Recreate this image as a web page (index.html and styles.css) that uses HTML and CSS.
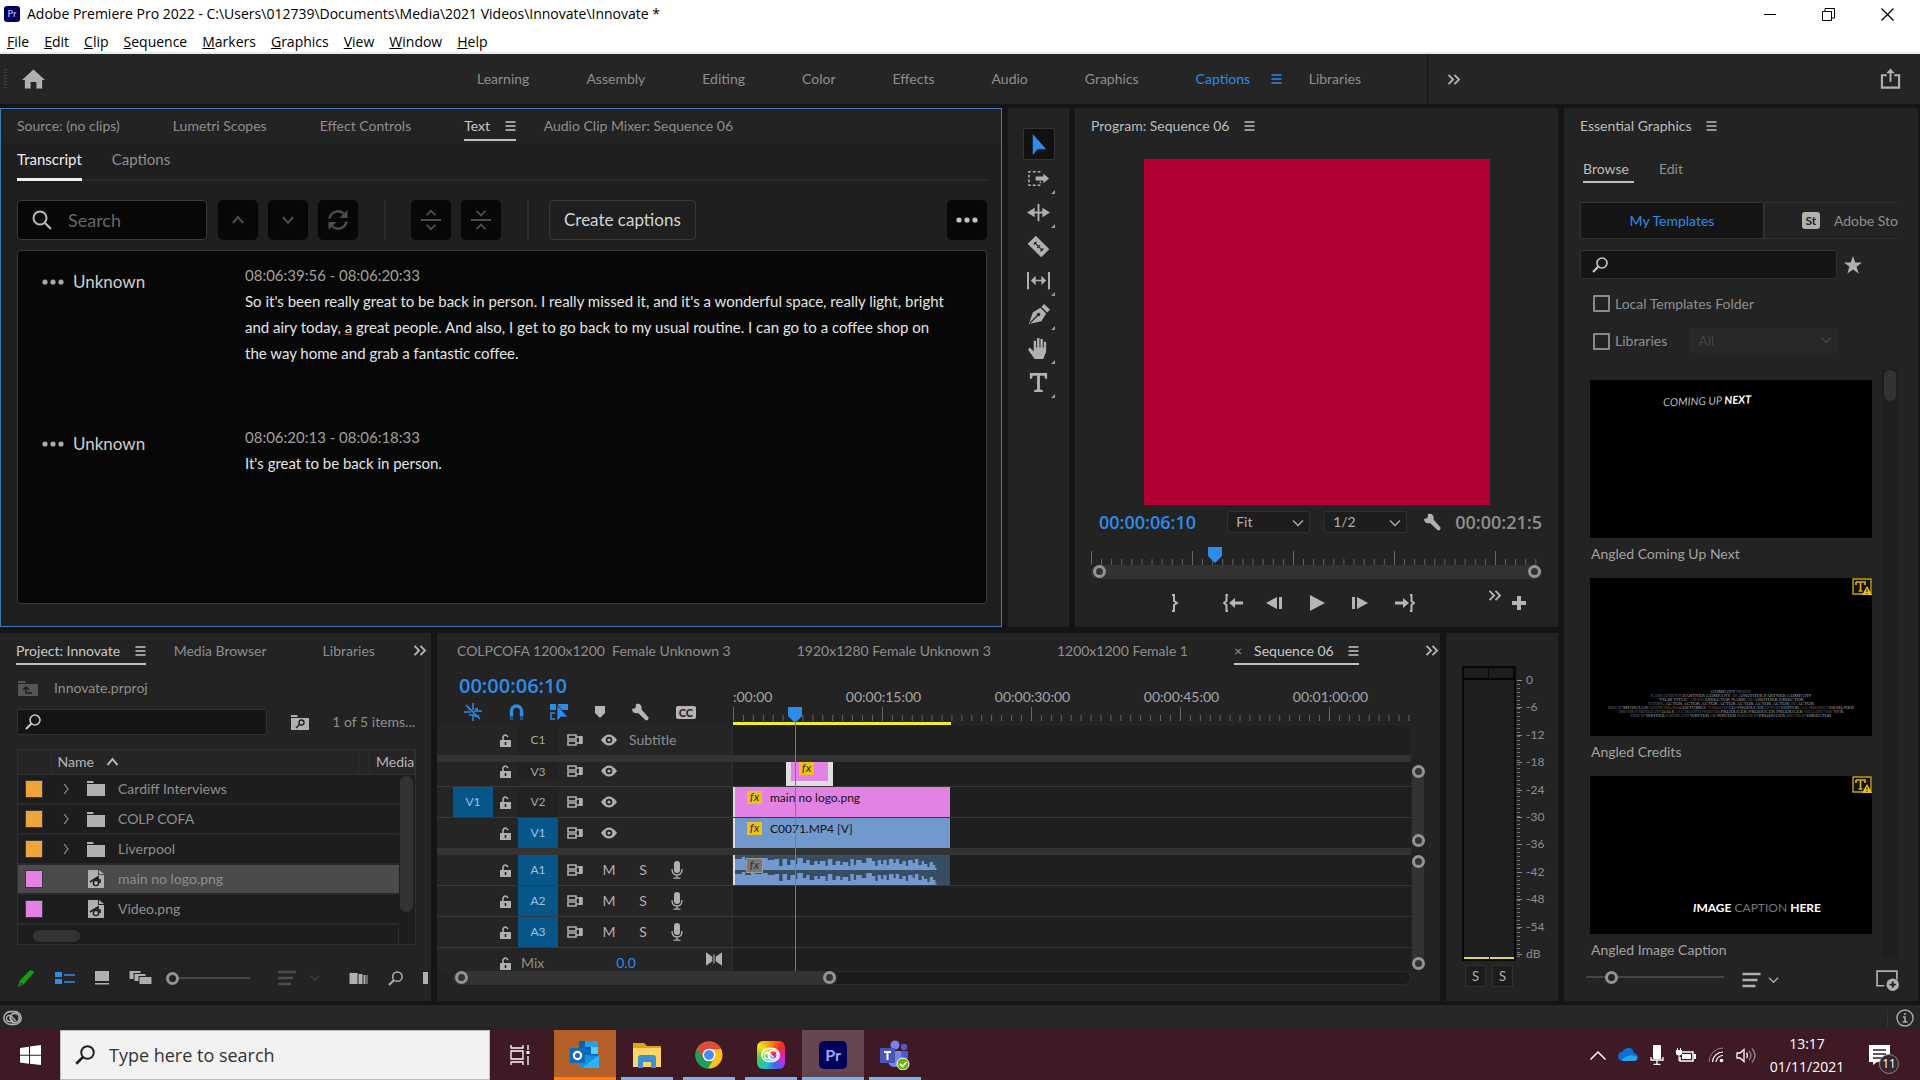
FILE: index.html
```html
<!DOCTYPE html>
<html lang="en">
<head>
    <meta charset="UTF-8">
    <meta name="viewport" content="width=device-width, initial-scale=1.0">
    <title>Adobe Premiere Pro 2022</title>
    <link rel="stylesheet" href="styles.css">
</head>
<body>
    <!-- icon sprite -->
    <svg class="sprite" aria-hidden="true">
        <symbol id="menu" viewBox="0 0 10 10"><path d="M0 1h10M0 5h10M0 9h10" stroke="currentColor" stroke-width="1.4"/></symbol>
        <symbol id="more" viewBox="0 0 22 6"><g fill="currentColor"><circle cx="3" cy="3" r="2.6"/><circle cx="11" cy="3" r="2.6"/><circle cx="19" cy="3" r="2.6"/></g></symbol>
        <symbol id="chevrons" viewBox="0 0 14 12"><path d="M1 1l5 5-5 5M7.500 1l5 5-5 5" fill="none" stroke="currentColor" stroke-width="2"/></symbol>
        <symbol id="down" viewBox="0 0 12 8"><path d="M1 1.500l5 5 5-5" fill="none" stroke="currentColor" stroke-width="1.300"/></symbol>
        <symbol id="home" viewBox="0 0 24 20"><path d="M12 0L0 11h3v9h6v-7h6v7h6v-9h3z" fill="currentColor"/></symbol>
        <symbol id="share" viewBox="0 0 22 22"><path d="M7 7H2v13h18V7h-5" fill="none" stroke="currentColor" stroke-width="2.200"/><path d="M10 14V5H6.500L11 0l4.500 5H12v9z" fill="currentColor"/></symbol>
        <symbol id="glass" viewBox="0 0 20 20"><circle cx="8" cy="8" r="6.500" fill="none" stroke="currentColor" stroke-width="2"/><path d="M13 13l6 6" stroke="currentColor" stroke-width="2.200"/></symbol>
        <symbol id="glass-flip" viewBox="0 0 16 16"><circle cx="10" cy="6" r="5" fill="none" stroke="currentColor" stroke-width="1.600"/><path d="M6.500 9.500L1 15" stroke="currentColor" stroke-width="2.200"/></symbol>
        <symbol id="up-chev" viewBox="0 0 14 10"><path d="M2 8l5-6 5 6" fill="none" stroke="currentColor" stroke-width="2"/></symbol>
        <symbol id="down-chev" viewBox="0 0 14 10"><path d="M2 2l5 6 5-6" fill="none" stroke="currentColor" stroke-width="2"/></symbol>
        <symbol id="refresh" viewBox="0 0 22 22"><path d="M2.500 9.500A8.500 8.500 0 0 1 17 5M19.500 12.500A8.500 8.500 0 0 1 5 17" fill="none" stroke="currentColor" stroke-width="2.400"/><path d="M20.500 1v8h-8zM1.500 21v-8h8z" fill="currentColor"/></symbol>
        <symbol id="split" viewBox="0 0 22 24"><path d="M0 12h22M6 7l5-5 5 5M6 17l5 5 5-5" fill="none" stroke="currentColor" stroke-width="2"/></symbol>
        <symbol id="merge" viewBox="0 0 22 24"><path d="M0 12h22M6 2l5 5 5-5M6 22l5-5 5 5" fill="none" stroke="currentColor" stroke-width="2"/></symbol>
        <symbol id="arrow" viewBox="0 0 24 24"><path d="M6 1v22l5-6h9z" fill="currentColor"/></symbol>
        <symbol id="track-select" viewBox="0 0 24 24"><path d="M14 5H2v14h12v-4" fill="none" stroke="currentColor" stroke-width="1.600" stroke-dasharray="3 2"/><path d="M9 10h8V7l6 5-6 5v-3H9z" fill="currentColor"/></symbol>
        <symbol id="ripple" viewBox="0 0 24 24"><path d="M12 3v18M4 12h16" stroke="currentColor" stroke-width="2"/><path d="M0 12l8-5v10zM24 12l-8-5v10z" fill="currentColor"/></symbol>
        <symbol id="razor" viewBox="0 0 24 24"><g transform="rotate(45 12 12)"><rect x="2" y="6" width="20" height="12" fill="currentColor"/><path d="M6 12h12M7 10v4M12 10v4M17 10v4" stroke="#232323" stroke-width="1.300"/></g></symbol>
        <symbol id="slip" viewBox="0 0 24 24"><path d="M1 3v18M23 3v18" stroke="currentColor" stroke-width="2.200"/><path d="M7 12h10" stroke="currentColor" stroke-width="1.600"/><path d="M4 12l5-5v10zM20 12l-5-5v10z" fill="currentColor"/></symbol>
        <symbol id="pen" viewBox="0 0 24 24"><path d="M2 22L6 10l8-5 6 6-5 8zM15 4l3-3 6 6-3 3z" fill="currentColor"/><path d="M3 21l8-8" stroke="#232323" stroke-width="1.400"/><circle cx="12" cy="12" r="1.800" fill="#232323"/></symbol>
        <symbol id="hand" viewBox="0 0 24 24"><path d="M8 23L1 13l2-2 4 4V4h2.500v7h1V1H13v10h1V2h2.500v9h1V5H20v10l-3 8z" fill="currentColor"/></symbol>
        <symbol id="type" viewBox="0 0 24 24"><path d="M3 2h18v6h-2l-1-3h-4.500v14l3 1v2h-9v-2l3-1V5H6L5 8H3z" fill="currentColor"/></symbol>
        <symbol id="wrench" viewBox="0 0 18 18"><path d="M1 6l3.500-1L5 1C9-.5 11.500 3 10.500 6.500l7 8q.5 3-2.500 3l-8-7.500C4 11 1 9.500 1 6z" fill="currentColor"/></symbol>
        <symbol id="mark-in" viewBox="0 0 8 18"><path d="M1 1h2v6l3 2-3 2v6H1" fill="none" stroke="currentColor" stroke-width="2"/></symbol>
        <symbol id="go-in" viewBox="0 0 20 18"><path d="M5 1H3.500v6L1 9l2.500 2v6H5" fill="none" stroke="currentColor" stroke-width="2"/><path d="M6 9l6-5v3.500h8v3h-8V14z" fill="currentColor"/></symbol>
        <symbol id="go-out" viewBox="0 0 20 18"><path d="M15 1h1.500v6L19 9l-2.500 2v6H15" fill="none" stroke="currentColor" stroke-width="2"/><path d="M14 9L8 4v3.500H0v3h8V14z" fill="currentColor"/></symbol>
        <symbol id="step-back" viewBox="0 0 16 12"><path d="M0 6l11-6v12zM13 0h3v12h-3z" fill="currentColor"/></symbol>
        <symbol id="step-fwd" viewBox="0 0 16 12"><path d="M16 6L5 0v12zM0 0h3v12H0z" fill="currentColor"/></symbol>
        <symbol id="play" viewBox="0 0 16 16"><path d="M1 0v16l15-8z" fill="currentColor"/></symbol>
        <symbol id="plus" viewBox="0 0 14 14"><path d="M7 0v14M0 7h14" stroke="currentColor" stroke-width="4"/></symbol>
        <symbol id="head" viewBox="0 0 14 16"><path d="M0 0h14v9l-7 7-7-7z" fill="#2d8ceb"/></symbol>
        <symbol id="star" viewBox="0 0 18 18"><path d="M9 0l2.300 6.500H18l-5.400 4.200 2 6.800L9 13.500l-5.600 4 2-6.800L0 6.500h6.700z" fill="currentColor"/></symbol>
        <symbol id="warn" viewBox="0 0 20 17"><path d="M1 1h18v15H1z" fill="#111" stroke="#c9a400" stroke-width="1.400"/><path d="M4 4h9v3M8.500 4v9M6.500 13h4M4 4v3" fill="none" stroke="#d8b20c" stroke-width="1.700"/><path d="M15 8l5 9H10z" fill="#e9c51a"/><path d="M15 11v3M15 15v1" stroke="#111"/></symbol>
        <symbol id="sort" viewBox="0 0 18 16"><path d="M0 2h18M0 8h15M0 14h13" stroke="currentColor" stroke-width="2.400"/></symbol>
        <symbol id="new-layer" viewBox="0 0 22 20"><path d="M8 15H1V1h19v8" fill="none" stroke="currentColor" stroke-width="1.600"/><circle cx="16" cy="14" r="6" fill="currentColor"/><path d="M16 11v6M13 14h6" stroke="#232323" stroke-width="1.800"/></symbol>
        <symbol id="folder" viewBox="0 0 18 15"><path d="M0 0h6l1 2H0zM0 3h18v12H0z" fill="currentColor"/></symbol>
        <symbol id="folder-up" viewBox="0 0 20 15"><path d="M0 0h7l1 2H0zM0 3h20v12H0z" fill="currentColor"/><path d="M14 12H8V7M5 9l3-3 3 3" fill="none" stroke="#1d1d1d" stroke-width="1.500"/></symbol>
        <symbol id="folder-find" viewBox="0 0 18 15"><path d="M0 0h6l1 2H0zM0 3h18v12H0z" fill="currentColor"/><circle cx="10.500" cy="7.500" r="2.500" fill="none" stroke="#1d1d1d" stroke-width="1.300"/><path d="M8.500 9.500L5 13" stroke="#1d1d1d" stroke-width="1.500"/></symbol>
        <symbol id="png" viewBox="0 0 16 18"><path d="M0 0h10v5h6v13H0zM11 0l5 4h-5z" fill="currentColor"/><path d="M2 12l8-5v3M6 10h6v3" fill="none" stroke="#1d1d1d" stroke-width="1.600"/><circle cx="8" cy="13" r="2.600" fill="none" stroke="#1d1d1d" stroke-width="1.400"/></symbol>
        <symbol id="chev-right" viewBox="0 0 6 10"><path d="M1 0l4 5-4 5" fill="none" stroke="currentColor" stroke-width="1.200"/></symbol>
        <symbol id="pencil" viewBox="0 0 18 18"><path d="M0 18l2-7L12 1q3-2 5 1.500L6 15z" fill="#17a017"/><path d="M2 16l1.500-3L5 15z" fill="#232323"/></symbol>
        <symbol id="list" viewBox="0 0 20 12"><path d="M0 0h7v5H0zM0 7h7v5H0z" fill="#2d8ceb"/><path d="M9 3h11M9 10h11" stroke="#2d8ceb" stroke-width="1.300"/></symbol>
        <symbol id="icon-view" viewBox="0 0 14 14"><path d="M0 0h14v10H0zM0 12h14v1.500H0z" fill="currentColor"/></symbol>
        <symbol id="freeform" viewBox="0 0 22 14"><path d="M0 0h11v2H4v6H0zM5 3h11v2H9v5H5zM10 6h12v7H10z" fill="currentColor"/></symbol>
        <symbol id="automate" viewBox="0 0 18 11"><path d="M0 0h8v11H0zM9 1h4v10H9zM14 2h2v9h-2zM17 2h1v9h-1z" fill="currentColor"/></symbol>
        <symbol id="nest" viewBox="0 0 18 18"><path d="M9 0v7M9 11v7M5 4v3M13 5v2M0 9h7M10 8h8M2 2l14 14M11 6h3M5 12h4M10 13h5" stroke="#2d8ceb" stroke-width="1.500"/></symbol>
        <symbol id="magnet" viewBox="0 0 14 16"><path d="M2 12V7a5 5 0 0 1 10 0v5" fill="none" stroke="#2d8ceb" stroke-width="3.400"/><path d="M2 12v4M12 12v4" stroke="#1a5590" stroke-width="3.400"/></symbol>
        <symbol id="linked" viewBox="0 0 18 17"><path d="M0 0h6v6H0zM8 0h10v6H8z" fill="#2d8ceb"/><path d="M5 9H1v6h4" fill="none" stroke="#2d8ceb" stroke-width="1.500"/><path d="M7 1v16l4-4h7z" fill="#2d8ceb" stroke="#232323" stroke-width=".8"/></symbol>
        <symbol id="marker" viewBox="0 0 10 12"><path d="M0 0h10v7l-5 5-5-5z" fill="currentColor"/></symbol>
        <symbol id="lock" viewBox="0 0 11 13"><path d="M0 6h11v7H0z" fill="currentColor"/><path d="M3 6V3q2-4 5 0" fill="none" stroke="currentColor" stroke-width="1.600"/><path d="M5.500 8v3" stroke="#232323" stroke-width="1.600"/></symbol>
        <symbol id="sync" viewBox="0 0 16 12"><path d="M1 1h8v4H1zM1 7h8v4H1zM9 3h6v6H9" fill="none" stroke="currentColor" stroke-width="1.600"/><path d="M12 2h3v8h-3z" fill="currentColor"/></symbol>
        <symbol id="eye" viewBox="0 0 16 12"><path d="M0 6q8-11 16 0-8 11-16 0z" fill="currentColor"/><circle cx="8" cy="6" r="3.300" fill="#232323"/><circle cx="8" cy="6" r="1.600" fill="currentColor"/></symbol>
        <symbol id="mic" viewBox="0 0 12 18"><rect x="3" y="0" width="6" height="12" rx="3" fill="currentColor"/><path d="M1 8q0 6 5 6t5-6M6 14v3M2.500 17.200h7" fill="none" stroke="currentColor" stroke-width="1.300"/></symbol>
        <symbol id="bowtie" viewBox="0 0 14 12"><path d="M0 0l5.500 4v4L0 12zM14 0L8.500 4v4L14 12z" fill="currentColor"/><path d="M7 2v8" stroke="currentColor"/></symbol>
        <symbol id="creative" viewBox="0 0 22 16"><rect x="1" y="1" width="19" height="14" rx="7" fill="none" stroke="currentColor" stroke-width="1.700"/><circle cx="13" cy="8" r="5" fill="none" stroke="currentColor" stroke-width="2"/><path d="M4 10q-1-4 3-5 2 0 4 3l3 3M8 8l3 4H7q-3 0-3-3" fill="none" stroke="currentColor" stroke-width="1.500"/></symbol>
        <symbol id="wave" viewBox="0 0 190 15" preserveAspectRatio="none"><path d="M0 15V4h6V2h3v3h5V3h4v1h6V3h5v2h6v-1h4v7h3V4h4v6h3V5h4v4h2V3h5v5h3V5h3v5h4V6h3v3h2V6h5v5h2V4h4v6h3V6h4v4h2V7h5v4h2V4h3v6h2V5h5v3h4V3h5v3h3v5h2V5h3v4h2V5h3v5h2V4h4v4h2V4h3v5h3V6h3v5h2V5h4v3h2V4h3v6h3V6h2v3h3v3h2V7h3v3h2v3h1V15z" fill="#7199cd"/></symbol>
    </svg>

    <header class="titlebar">
        <div class="title-row">
            <span class="pr-badge">Pr</span>
            <h1>Adobe Premiere Pro 2022 - C:\Users\012739\Documents\Media\2021 Videos\Innovate\Innovate *</h1>
            <div class="window-buttons">
                <button aria-label="Minimize"><svg width="12" height="12"><path d="M0 6.500h12" stroke="#000"/></svg></button>
                <button aria-label="Restore"><svg width="13" height="13"><path d="M.5 3.500h9v9h-9zM3 3V.5h9.500V10H10" fill="none" stroke="#000"/></svg></button>
                <button aria-label="Close"><svg width="13" height="13"><path d="M.5.5l12 12M12.500.5l-12 12" stroke="#000" stroke-width="1.200"/></svg></button>
            </div>
        </div>
        <nav class="menu-row">
            <button><u>F</u>ile</button>
            <button><u>E</u>dit</button>
            <button><u>C</u>lip</button>
            <button><u>S</u>equence</button>
            <button><u>M</u>arkers</button>
            <button><u>G</u>raphics</button>
            <button><u>V</u>iew</button>
            <button><u>W</u>indow</button>
            <button><u>H</u>elp</button>
        </nav>
    </header>

    <nav class="workspaces">
        <span class="grip"></span>
        <button class="home" aria-label="Home"><svg><use href="#home"/></svg></button>
        <div class="workspace-tabs">
            <button>Learning</button>
            <button>Assembly</button>
            <button>Editing</button>
            <button>Color</button>
            <button>Effects</button>
            <button>Audio</button>
            <button>Graphics</button>
            <button class="current">Captions <svg class="menu"><use href="#menu"/></svg></button>
            <button>Libraries</button>
        </div>
        <button class="overflow" aria-label="More workspaces"><svg class="chevrons"><use href="#chevrons"/></svg></button>
        <button class="share" aria-label="Quick export"><svg><use href="#share"/></svg></button>
    </nav>

    <main class="panels">
        <div class="left-side">
            <div class="row top-row">
                <section class="panel text-panel">
                    <div class="tabs">
                        <button>Source: (no clips)</button>
                        <button>Lumetri Scopes</button>
                        <button>Effect Controls</button>
                        <button class="current">Text <svg class="menu"><use href="#menu"/></svg></button>
                        <button>Audio Clip Mixer: Sequence 06</button>
                    </div>
                    <div class="text-content">
                        <div class="sub-tabs">
                            <button class="current">Transcript</button>
                            <button>Captions</button>
                        </div>
                        <div class="transcript-tools">
                            <label class="transcript-search"><svg><use href="#glass"/></svg><input type="text" placeholder="Search" aria-label="Search transcript"></label>
                            <div class="group">
                                <button class="square" aria-label="Previous"><svg class="small-chev"><use href="#up-chev"/></svg></button>
                                <button class="square" aria-label="Next"><svg class="small-chev"><use href="#down-chev"/></svg></button>
                                <button class="square" aria-label="Replace"><svg><use href="#refresh"/></svg></button>
                            </div>
                            <div class="group">
                                <button class="square" aria-label="Split segment"><svg><use href="#split"/></svg></button>
                                <button class="square" aria-label="Merge segment"><svg><use href="#merge"/></svg></button>
                            </div>
                            <button class="create">Create captions</button>
                            <button class="square more" aria-label="More options"><svg class="dots"><use href="#more"/></svg></button>
                        </div>
                        <div class="transcript">
                            <article class="segment">
                                <button class="speaker"><svg class="dots"><use href="#more"/></svg>Unknown</button>
                                <div>
                                    <time>08:06:39:56 - 08:06:20:33</time>
                                    <p>So it's been really great to be back in person. I really missed it, and it's a wonderful space, really light, bright<br>
                                    and airy today, <u>a</u> great people. And also, I get to go back to my usual routine. I can go to a coffee shop on<br>
                                    the way home and grab a fantastic coffee.</p>
                                </div>
                            </article>
                            <article class="segment">
                                <button class="speaker"><svg class="dots"><use href="#more"/></svg>Unknown</button>
                                <div>
                                    <time>08:06:20:13 - 08:06:18:33</time>
                                    <p>It's great to be back in person.</p>
                                </div>
                            </article>
                        </div>
                    </div>
                </section>

                <section class="panel tools">
                    <button class="active" aria-label="Selection"><svg><use href="#arrow"/></svg></button>
                    <button class="sub" aria-label="Track select"><svg><use href="#track-select"/></svg></button>
                    <button class="sub" aria-label="Ripple edit"><svg><use href="#ripple"/></svg></button>
                    <button aria-label="Razor"><svg><use href="#razor"/></svg></button>
                    <button class="sub" aria-label="Slip"><svg><use href="#slip"/></svg></button>
                    <button class="sub" aria-label="Pen"><svg><use href="#pen"/></svg></button>
                    <button class="sub" aria-label="Hand"><svg><use href="#hand"/></svg></button>
                    <button class="sub" aria-label="Type"><svg><use href="#type"/></svg></button>
                </section>

                <section class="panel program">
                    <h2>Program: Sequence 06 <svg class="menu"><use href="#menu"/></svg></h2>
                    <div class="monitor"></div>
                    <div class="monitor-row">
                        <span class="timecode">00:00:06:10</span>
                        <label class="drop"><select aria-label="Zoom level"><option>Fit</option></select><svg><use href="#down"/></svg></label>
                        <label class="drop"><select aria-label="Playback resolution"><option>1/2</option></select><svg><use href="#down"/></svg></label>
                        <button class="wrench" aria-label="Settings"><svg><use href="#wrench"/></svg></button>
                        <span class="duration">00:00:21:5</span>
                    </div>
                    <div class="monitor-ruler">
                        <i></i><i></i><i></i><i></i><i></i>
                        <svg class="monitor-head"><use href="#head"/></svg>
                    </div>
                    <div class="zoom-bar"></div>
                    <div class="transport">
                        <button aria-label="Mark out"><svg width="8" height="18"><use href="#mark-in"/></svg></button>
                        <button aria-label="Go to in"><svg width="20" height="18"><use href="#go-in"/></svg></button>
                        <button aria-label="Step back"><svg width="16" height="12"><use href="#step-back"/></svg></button>
                        <button aria-label="Play"><svg width="16" height="16"><use href="#play"/></svg></button>
                        <button aria-label="Step forward"><svg width="16" height="12"><use href="#step-fwd"/></svg></button>
                        <button aria-label="Go to out"><svg width="20" height="18"><use href="#go-out"/></svg></button>
                        <span class="transport-end">
                            <button class="raised" aria-label="More controls"><svg class="chevrons"><use href="#chevrons"/></svg></button>
                            <button aria-label="Button editor"><svg width="14" height="14"><use href="#plus"/></svg></button>
                        </span>
                    </div>
                </section>
            </div>

            <div class="row bottom-row">
                <section class="panel project">
                    <div class="tabs">
                        <button class="current">Project: Innovate <svg class="menu"><use href="#menu"/></svg></button>
                        <button>Media Browser</button>
                        <button>Libraries</button>
                        <button class="overflow" aria-label="More panels"><svg class="chevrons"><use href="#chevrons"/></svg></button>
                    </div>
                    <div class="project-path"><svg><use href="#folder-up"/></svg>Innovate.prproj</div>
                    <div class="project-search">
                        <label class="search-box"><svg><use href="#glass-flip"/></svg><input type="text" aria-label="Search project"></label>
                        <button aria-label="New search bin"><svg class="folder"><use href="#folder-find"/></svg></button>
                        <span>1 of 5 items...</span>
                    </div>
                    <div class="bin">
                        <table>
                            <colgroup><col class="c-label"><col><col class="c-gap"><col class="c-media"></colgroup>
                            <thead>
                                <tr><th></th><th>Name <svg class="sort-up"><use href="#up-chev"/></svg></th><th></th><th>Media</th></tr>
                            </thead>
                            <tbody>
                                <tr><td><i class="swatch"></i></td><td colspan="3"><div class="item"><svg class="chev"><use href="#chev-right"/></svg><svg class="folder"><use href="#folder"/></svg>Cardiff Interviews</div></td></tr>
                                <tr><td><i class="swatch"></i></td><td colspan="3"><div class="item"><svg class="chev"><use href="#chev-right"/></svg><svg class="folder"><use href="#folder"/></svg>COLP COFA</div></td></tr>
                                <tr><td><i class="swatch"></i></td><td colspan="3"><div class="item"><svg class="chev"><use href="#chev-right"/></svg><svg class="folder"><use href="#folder"/></svg>Liverpool</div></td></tr>
                                <tr class="selected"><td><i class="swatch pink"></i></td><td colspan="3"><div class="item"><span class="chev"></span><svg class="file"><use href="#png"/></svg>main no logo.png</div></td></tr>
                                <tr><td><i class="swatch pink"></i></td><td colspan="3"><div class="item"><span class="chev"></span><svg class="file"><use href="#png"/></svg>Video.png</div></td></tr>
                            </tbody>
                        </table>
                        <div class="bin-scroll-y"></div>
                        <div class="bin-scroll-x"></div>
                    </div>
                    <div class="project-footer">
                        <button aria-label="Writable"><svg width="17" height="17"><use href="#pencil"/></svg></button>
                        <button aria-label="List view"><svg width="20" height="12"><use href="#list"/></svg></button>
                        <button aria-label="Icon view"><svg width="14" height="14"><use href="#icon-view"/></svg></button>
                        <button aria-label="Freeform view"><svg width="23" height="14"><use href="#freeform"/></svg></button>
                        <input type="range" value="0" aria-label="Icon size">
                        <button class="dim" aria-label="Sort icons"><svg width="18" height="16"><use href="#sort"/></svg><svg width="10" height="8"><use href="#down"/></svg></button>
                        <button aria-label="Automate to sequence"><svg width="19" height="11"><use href="#automate"/></svg></button>
                        <button aria-label="Find"><svg width="15" height="15"><use href="#glass-flip"/></svg></button>
                        <span class="cut-bin"></span>
                    </div>
                </section>

                <section class="panel timeline">
                    <div class="tabs">
                        <button>COLPCOFA 1200x1200&nbsp; Female Unknown 3</button>
                        <button>1920x1280 Female Unknown 3</button>
                        <button>1200x1200 Female 1</button>
                        <button class="current"><span class="close">×</span>Sequence 06 <svg class="menu"><use href="#menu"/></svg></button>
                        <button class="overflow" aria-label="More sequences"><svg class="chevrons"><use href="#chevrons"/></svg></button>
                    </div>
                    <div class="timeline-body">
                        <div class="timeline-top">
                            <div class="timeline-tools">
                                <span class="timecode">00:00:06:10</span>
                                <div class="timeline-icons">
                                    <button aria-label="Nest"><svg width="18" height="18"><use href="#nest"/></svg></button>
                                    <button aria-label="Snap"><svg width="15" height="16"><use href="#magnet"/></svg></button>
                                    <button aria-label="Linked selection"><svg width="18" height="17"><use href="#linked"/></svg></button>
                                    <button aria-label="Add marker"><svg width="10" height="12"><use href="#marker"/></svg></button>
                                    <button aria-label="Timeline settings"><svg width="18" height="18"><use href="#wrench"/></svg></button>
                                    <button class="cc" aria-label="Captions">CC</button>
                                </div>
                            </div>
                            <div class="timeline-ruler">
                                <div class="labels"><span>:00:00</span><span>00:00:15:00</span><span>00:00:30:00</span><span>00:00:45:00</span><span>00:01:00:00</span></div>
                                <div class="ticks"><i></i><i></i><i></i><i></i><i></i></div>
                                <div class="work-area"></div>
                            </div>
                        </div>
                        <div class="tracks">
                            <div class="track">
                                <div class="track-head"><svg class="lock"><use href="#lock"/></svg><span class="target off">C1</span><svg class="sync"><use href="#sync"/></svg><svg class="eye"><use href="#eye"/></svg><span class="wide">Subtitle</span></div>
                                <div class="lane"></div>
                            </div>
                            <div class="divider"></div>
                            <div class="track short">
                                <div class="track-head top"><svg class="lock"><use href="#lock"/></svg><span class="target off">V3</span><svg class="sync"><use href="#sync"/></svg><svg class="eye"><use href="#eye"/></svg></div>
                                <div class="lane"><div class="clip chosen"><i class="fx">fx</i></div></div>
                            </div>
                            <div class="track line">
                                <div class="track-head"><span class="source">V1</span><svg class="lock"><use href="#lock"/></svg><span class="target off">V2</span><svg class="sync"><use href="#sync"/></svg><svg class="eye"><use href="#eye"/></svg></div>
                                <div class="lane"><div class="clip pink"><i class="fx">fx</i>main no logo.png</div></div>
                            </div>
                            <div class="track line">
                                <div class="track-head"><svg class="lock"><use href="#lock"/></svg><span class="target">V1</span><svg class="sync"><use href="#sync"/></svg><svg class="eye"><use href="#eye"/></svg></div>
                                <div class="lane"><div class="clip blue"><i class="fx">fx</i>C0071.MP4 [V]</div></div>
                            </div>
                            <div class="divider"></div>
                            <div class="track">
                                <div class="track-head"><svg class="lock"><use href="#lock"/></svg><span class="target">A1</span><svg class="sync"><use href="#sync"/></svg><button>M</button><button>S</button><svg class="mic"><use href="#mic"/></svg></div>
                                <div class="lane"><div class="clip audio"><svg><use href="#wave"/></svg><svg><use href="#wave"/></svg><i class="fx grey">fx</i></div></div>
                            </div>
                            <div class="track line">
                                <div class="track-head"><svg class="lock"><use href="#lock"/></svg><span class="target">A2</span><svg class="sync"><use href="#sync"/></svg><button>M</button><button>S</button><svg class="mic"><use href="#mic"/></svg></div>
                                <div class="lane"></div>
                            </div>
                            <div class="track line">
                                <div class="track-head"><svg class="lock"><use href="#lock"/></svg><span class="target">A3</span><svg class="sync"><use href="#sync"/></svg><button>M</button><button>S</button><svg class="mic"><use href="#mic"/></svg></div>
                                <div class="lane"></div>
                            </div>
                            <div class="track short line">
                                <div class="track-head mix"><svg class="lock"><use href="#lock"/></svg><span class="mix-name">Mix</span><span class="mix-value">0.0</span><svg class="bowtie"><use href="#bowtie"/></svg></div>
                                <div class="lane"></div>
                            </div>
                        </div>
                        <div class="track-scrolls"><div class="v-bar video-bar"></div><div class="v-bar audio-bar"></div></div>
                        <div class="h-scroll"><div class="zoom-bar"></div></div>
                        <div class="playhead"><svg><use href="#head"/></svg></div>
                    </div>
                </section>

                <section class="panel meters">
                    <div class="meter-main">
                        <div class="meter-box"><i></i><i></i></div>
                        <ol class="scale"><li>0</li><li>-6</li><li>-12</li><li>-18</li><li>-24</li><li>-30</li><li>-36</li><li>-42</li><li>-48</li><li>-54</li><li>dB</li></ol>
                    </div>
                    <div class="solo"><button>S</button><button>S</button></div>
                </section>
            </div>
        </div>

        <section class="panel graphics">
            <h2>Essential Graphics <svg class="menu"><use href="#menu"/></svg></h2>
            <div class="graphics-tabs">
                <button class="current">Browse</button>
                <button>Edit</button>
            </div>
            <div class="source-switch">
                <button class="current">My Templates</button>
                <button class="stock"><b>St</b>Adobe Sto</button>
            </div>
            <div class="graphics-search">
                <label class="search-box"><svg><use href="#glass-flip"/></svg><input type="text" aria-label="Search templates"></label>
                <button aria-label="Favourites"><svg width="18" height="18"><use href="#star"/></svg></button>
            </div>
            <div class="filters">
                <label><input type="checkbox">Local Templates Folder</label>
                <div class="filter-row">
                    <label><input type="checkbox">Libraries</label>
                    <label class="drop off"><select disabled aria-label="Library"><option>All</option></select><svg><use href="#down"/></svg></label>
                </div>
            </div>
            <div class="template-area">
                <div class="templates">
                    <figure>
                        <div class="thumb"><p class="coming">COMING UP <b>NEXT</b></p></div>
                        <figcaption>Angled Coming Up Next</figcaption>
                    </figure>
                    <figure>
                        <div class="thumb"><svg class="warn"><use href="#warn"/></svg>
                            <div class="credits">
                                <p><b>COMPANY</b> PRESENTS</p>
                                <p>IN ASSOCIATION WITH <b>PARTNER COMPANY</b> AND <b>ANOTHER PARTNER COMPANY</b></p>
                                <p><b>"FILM TITLE"</b> A FILM BY <b>DIRECTOR NAME</b> AND <b>ANOTHER DIRECTOR</b></p>
                                <p>FEATURING <b>ACTOR ACTOR ACTOR ACTOR ACTOR ACTOR ACTOR</b> AND <b>ACTOR</b></p>
                                <p>MUSIC BY <b>MUSICIAN</b> COSTUME DESIGNER <b>COSTUMES</b> CO-PRODUCER <b>CO-PRODUCER</b> EDITED BY <b>EDITOR</b> A.C.E. PROD DESIGN <b>DESIGNER</b></p>
                                <p>DIRECTOR OF PHOTOGRAPHY <b>D.O.P.</b> A.S.C. EXECUTIVE PRODUCERS <b>PRODUCER PRODUCER PRODUCER</b> VISUAL EFFECTS BY <b>VFX</b></p>
                                <p>STORY BY <b>WRITER</b> SCREENPLAY BY <b>WRITER</b> AND <b>WRITER</b> PRODUCED BY <b>PRODUCER</b> DIRECTED BY <b>DIRECTOR</b></p>
                            </div>
                        </div>
                        <figcaption>Angled Credits</figcaption>
                    </figure>
                    <figure>
                        <div class="thumb"><svg class="warn"><use href="#warn"/></svg><p class="caption-here"><b><i>I</i>MAGE</b> CAPTION <b>HERE</b></p></div>
                        <figcaption>Angled Image Caption</figcaption>
                    </figure>
                </div>
                <div class="template-scroll"></div>
            </div>
            <div class="graphics-footer">
                <input type="range" value="15" aria-label="Thumbnail size">
                <button aria-label="Sort"><svg width="19" height="16"><use href="#sort"/></svg><svg width="11" height="8"><use href="#down"/></svg></button>
                <button class="new" aria-label="New layer"><svg width="23" height="21"><use href="#new-layer"/></svg></button>
            </div>
        </section>
    </main>

    <footer class="statusbar">
        <svg width="20" height="16"><use href="#creative"/></svg>
        <button aria-label="Info"><svg width="18" height="18"><circle cx="9" cy="9" r="8" fill="none" stroke="#aaa" stroke-width="1.400"/><path d="M9 4v2M7 8h2v5M6.500 13h5" stroke="#aaa" stroke-width="1.600" fill="none"/></svg></button>
    </footer>

    <div class="taskbar">
        <button class="start" aria-label="Start"><svg width="21" height="20"><path d="M0 3l9-1.300v8H0zM10 1.500L21 0v9.700H10zM0 10.700h9v8L0 17.500zM10 10.700h11V20l-11-1.300z" fill="#fff"/></svg></button>
        <label class="task-search"><svg><use href="#glass-flip"/></svg><input type="text" placeholder="Type here to search" aria-label="Type here to search"></label>
        <button class="task-view" aria-label="Task view"><svg width="20" height="20"><path d="M1 0v3h12V0M1 20v-3h12v3M1 6h12v8H1zM18 0v5M18 11v9" fill="none" stroke="#fff" stroke-width="1.300"/><path d="M16.500 6h3v3h-3z" fill="#fff"/></svg></button>
        <button class="app alert" aria-label="Outlook"><svg width="30" height="30" viewBox="0 0 30 30"><path d="M9 1h19v15H9z" fill="#0a63b0"/><path d="M15 1h13v6H15z" fill="#28a0e4"/><path d="M21 7h7v7h-7z" fill="#50d0ff"/><path d="M9 14l20 2v12H9z" fill="#1490df"/><path d="M29 15L12 28h17z" fill="#2ab4f4"/><rect y="8" width="15" height="15" rx="1" fill="#0f6cbd"/><circle cx="7.500" cy="15.500" r="3.600" fill="none" stroke="#fff" stroke-width="2.200"/></svg></button>
        <button class="app" aria-label="File Explorer"><svg width="28" height="26" viewBox="0 0 28 26"><path d="M0 1h11l3 3H28v21H0z" fill="#e0a40e"/><path d="M0 6h28v19H0z" fill="#fcd468"/><path d="M5 26V16q0-3 3-3h12q3 0 3 3v10h-5v-6h-8v6z" fill="#3c91d2"/></svg></button>
        <button class="app" aria-label="Chrome"><svg width="28" height="28" viewBox="0 0 28 28"><circle cx="14" cy="14" r="13.500" fill="#fbc116"/><path d="M2 8A13.500 13.500 0 0 1 26 8H14l-5.500 9.500z" fill="#dd4b3e"/><path d="M2 7.500A13.500 13.500 0 0 0 13 27.500l6-10.500-5 3q-4 0-5.500-3z" fill="#1c9f57"/><circle cx="14" cy="14" r="6.300" fill="#fff"/><circle cx="14" cy="14" r="5" fill="#4b8bf5"/></svg></button>
        <button class="app" aria-label="Creative Cloud"><span class="cc-icon"><svg width="20" height="16"><use href="#creative"/></svg></span></button>
        <button class="app front" aria-label="Premiere Pro"><span class="pr-badge large">Pr</span></button>
        <button class="app" aria-label="Teams"><svg width="30" height="30" viewBox="0 0 30 30"><circle cx="15" cy="5" r="4.500" fill="#7b83eb"/><circle cx="24" cy="7" r="3.200" fill="#5059c9"/><path d="M8 11h15v10q-2 6-8 6t-7-6z" fill="#7b83eb"/><path d="M21 11h7v8q-2 5-6 3z" fill="#5059c9"/><rect y="8" width="15" height="15" rx="1" fill="#4b53bc"/><path d="M4 12h7M7.500 12v8" stroke="#fff" stroke-width="2"/><circle cx="23" cy="24" r="6" fill="#6bb700" stroke="#fff"/><path d="M20 24l2.500 2.500L26.500 22" fill="none" stroke="#fff" stroke-width="1.800"/></svg></button>
        <div class="tray">
            <button aria-label="Show hidden icons"><svg width="16" height="9"><path d="M.5 8.500L8 1l7.500 7.500" fill="none" stroke="#fff" stroke-width="1.500"/></svg></button>
            <button aria-label="OneDrive"><svg width="20" height="14" viewBox="0 0 20 14"><path d="M4 13q-4-1-4-5 1-4 4-4 3-5 8-4 3 1 4 5 4 1 4 5-1 3-4 3z" fill="#0f6fd0"/><path d="M4 13q1-4 6-5 5-2 9 1 1 3-3 4z" fill="#28a4ea"/></svg></button>
            <button aria-label="Microphone"><svg width="14" height="20" viewBox="0 0 14 20"><rect x="3" width="8" height="14" rx="1" fill="#fff"/><path d="M1 12v3h12v-3M7 15v4M3.500 19.300h7" fill="none" stroke="#fff" stroke-width="1.300"/></svg></button>
            <button aria-label="Battery"><svg width="20" height="15" viewBox="0 0 20 15"><path d="M5 4h12v9H4V9" fill="none" stroke="#fff" stroke-width="1.500"/><path d="M6 6h9v5H6zM18 6h2v5h-2zM0 2h6v4q-3 3-6 0zM1 0h1v2H1zM4 0h1v2H4zM2.500 7h1v6h-1z" fill="#fff"/></svg></button>
            <button aria-label="Network"><svg width="16" height="16" viewBox="0 0 16 16" fill="none"><path d="M1 15A14 14 0 0 1 15 1" stroke="#98808a"/><path d="M4.500 15A10.500 10.500 0 0 1 15 5M8 15a7 7 0 0 1 7-6.500" stroke="#fff" stroke-width="1.200"/><circle cx="13.500" cy="13.500" r="1.800" fill="#fff"/></svg></button>
            <button aria-label="Volume"><svg width="20" height="17" viewBox="0 0 20 17" fill="none"><path d="M1 6h3l4-3.500v12L4 11H1z" stroke="#fff" stroke-width="1.300"/><path d="M10.500 6q2 2.500 0 5" stroke="#fff" stroke-width="1.300"/><path d="M13 4q4 4.500 0 9M16 1.500q6 7 0 14" stroke="#98808a" stroke-width="1.300"/></svg></button>
        </div>
        <button class="clock"><span>13:17</span><span>01/11/2021</span></button>
        <button class="notice" aria-label="Notifications"><svg width="22" height="20" viewBox="0 0 22 20"><path d="M0 0h21v17H8l-4 3v-3H0z" fill="#fff"/><path d="M4 5h13M4 9h13M4 13h9" stroke="#3d1822" stroke-width="1.300"/></svg><span>11</span></button>
    </div>
</body>
</html>
```
FILE: styles.css
```css
*, *::before, *::after {
    box-sizing: border-box;
}

body {
    margin: 0;
    height: 100vh;
    min-width: 1500px;
    display: flex;
    flex-direction: column;
    background: #151515;
    color: #8e8e8e;
    font: 14px/20px Lato, "Liberation Sans", sans-serif;
    overflow: hidden;
}

button, input, select {
    font: inherit;
    color: inherit;
    background: none;
    border: none;
    padding: 0;
    margin: 0;
    white-space: nowrap;
}

h1, h2, p, ol, figure {
    margin: 0;
    padding: 0;
    font-size: inherit;
    font-weight: normal;
}

svg {
    display: block;
    flex: none;
}

.sprite {
    position: absolute;
    width: 0;
    height: 0;
}

.menu {
    width: 11px;
    height: 10px;
    display: inline-block;
    margin-left: 11px;
}

.chevrons {
    width: 14px;
    height: 11px;
    color: #b5b5b5;
}

.dots {
    width: 22px;
    height: 6px;
}

/* title bar and application menu */

.titlebar {
    height: 54px;
    background: #fff;
    border-bottom: 2px solid #e8eaec;
    color: #000;
    font: 14px/20px "Open Sans", "Liberation Sans", sans-serif;
}

.title-row {
    display: flex;
    align-items: center;
    height: 28px;
    padding: 0 3px 0 4px;
    gap: 7px;
}

.pr-badge {
    width: 16px;
    height: 16px;
    border-radius: 3px;
    background: #00005b;
    color: #a5a5ff;
    font: bold 9px/16px Lato, sans-serif;
    text-align: center;
}

.pr-badge.large {
    display: block;
    width: 28px;
    height: 28px;
    border-radius: 5px;
    font-size: 16px;
    line-height: 28px;
}

.window-buttons {
    display: flex;
    margin-left: auto;
}

.window-buttons button {
    width: 59px;
    height: 28px;
    display: grid;
    place-items: center;
}

.menu-row {
    display: flex;
    gap: 15px;
    padding: 2px 0 0 7px;
    height: 26px;
    align-items: center;
}

/* workspace bar */

.workspaces {
    height: 50px;
    display: flex;
    align-items: center;
    background: #252525;
    padding-right: 19px;
    margin-bottom: 4px;
}

.grip {
    width: 3px;
    height: 20px;
    margin-left: 4px;
    background: repeating-linear-gradient(#444 0 1px, transparent 1px 3px);
}

.home {
    margin-left: 15px;
    color: #b0b0b0;
}

.home svg {
    width: 23px;
    height: 20px;
}

.workspace-tabs {
    display: flex;
    gap: 57px;
    margin-left: 432px;
    align-self: stretch;
    align-items: center;
    padding-right: 66px;
    border-right: 1px solid #151515;
}

.workspace-tabs .current {
    color: #2d8ceb;
    margin-right: -30px;
}

.workspace-tabs .menu {
    margin-left: 17px;
}

.workspaces .overflow {
    margin-left: 19px;
}

.share {
    margin-left: auto;
    color: #b0b0b0;
}

.share svg {
    width: 21px;
    height: 22px;
}

/* panel frame */

.panels {
    flex: 1;
    min-height: 0;
    display: flex;
    gap: 6px;
    padding-right: 2px;
}

.left-side {
    flex: 1;
    min-width: 0;
    display: flex;
    flex-direction: column;
    gap: 6px;
}

.row {
    display: flex;
    gap: 6px;
    min-height: 0;
}

.top-row {
    flex: 519;
}

.bottom-row {
    flex: 368;
}

.panel {
    background: #232323;
    min-width: 0;
    display: flex;
    flex-direction: column;
}

.tabs {
    display: flex;
    flex: none;
    height: 34px;
    padding: 0 16px;
    gap: 53px;
    align-items: flex-start;
}

.tabs button {
    height: 32px;
    padding-top: 5px;
    border-bottom: 2px solid transparent;
}

.tabs .current {
    color: #c8c8c8;
    border-color: #c0c0c0;
}

.tabs .overflow {
    margin-left: auto;
}

.panel h2 {
    color: #bcbcbc;
    padding: 8px 16px;
    height: 36px;
}

/* text panel */

.text-panel {
    flex: 1;
    border: 1px solid #3d79b8;
}

.text-panel .tabs button {
    padding-top: 3px;
}

.text-panel .tabs .current {
    margin-right: -25px;
}

.text-content {
    flex: 1;
    min-height: 0;
    display: flex;
    flex-direction: column;
    background: #1f1f1f;
    padding: 0 14px 22px 16px;
}

.sub-tabs {
    display: flex;
    gap: 30px;
    height: 38px;
    font-size: 15px;
    border-bottom: 2px solid #2b2b2b;
}

.sub-tabs button {
    height: 38px;
    padding-bottom: 3px;
    border-bottom: 3px solid transparent;
}

.sub-tabs .current {
    color: #eee;
    border-color: #eee;
}

.transcript-tools {
    display: flex;
    align-items: center;
    padding: 19px 0 10px;
    font-size: 18px;
}

.transcript-search {
    display: flex;
    align-items: center;
    gap: 16px;
    width: 190px;
    height: 40px;
    padding: 0 14px;
    background: #070707;
    border: 1px solid #393939;
    border-radius: 4px;
    color: #bbb;
}

.transcript-search svg {
    width: 20px;
    height: 20px;
}

.transcript-search input {
    width: 100px;
    min-width: 0;
}

.transcript-search input::placeholder {
    color: #666;
}

.group {
    display: flex;
    gap: 10px;
    padding: 0 26px 0 11px;
    border-right: 2px solid #2c2c2c;
}

.group + .group {
    padding-left: 25px;
}

.square {
    width: 40px;
    height: 40px;
    border-radius: 5px;
    background: #070707;
    color: #4d4d4d;
    display: grid;
    place-items: center;
}

.square svg {
    width: 22px;
    height: 22px;
}

.square .small-chev {
    width: 14px;
    height: 10px;
}

.square .dots {
    width: 22px;
    height: 6px;
}

.square.more {
    margin-left: auto;
    color: #c4c4c4;
}

.create {
    height: 40px;
    margin-left: 20px;
    padding: 0 14px;
    border: 1px solid #383838;
    border-radius: 4px;
    color: #d4d4d4;
    font-size: 17px;
}

.transcript {
    flex: 1;
    background: #070707;
    border: 1px solid #383838;
    border-radius: 4px;
    padding: 11px 12px 12px 24px;
    color: #e4e4e4;
    font-size: 15px;
    line-height: 26px;
}

.segment {
    display: grid;
    grid-template-columns: 203px 1fr;
    align-items: start;
}

.segment + .segment {
    margin-top: 58px;
}

.speaker {
    display: flex;
    align-items: center;
    gap: 9px;
    height: 40px;
    color: #cfcfcf;
    font-size: 17px;
}

.speaker .dots {
    color: #aaa;
}

.segment time {
    color: #a0a0a0;
}

.segment p u {
    text-decoration-color: #b46a3c;
}

/* tools panel */

.tools {
    width: 61px;
    align-items: center;
    padding-top: 20px;
    color: #b0b0b0;
    gap: 2px;
}

.tools button {
    position: relative;
    width: 32px;
    height: 32px;
    display: grid;
    place-items: center;
}

.tools svg {
    width: 23px;
    height: 23px;
}

.tools .active {
    background: #111;
    border: 1px solid #333;
    border-radius: 3px;
    color: #2d8ceb;
}

.tools .sub::after {
    content: "";
    position: absolute;
    right: 0;
    bottom: 0;
    border: 2px solid transparent;
    border-right-color: #999;
    border-bottom-color: #999;
}

/* program monitor */

.program {
    width: 483px;
    padding-bottom: 8px;
}

.monitor {
    flex: 1;
    min-height: 0;
    aspect-ratio: 1;
    align-self: center;
    margin-top: 15px;
    background: #b10032;
}

.monitor-row {
    display: flex;
    align-items: center;
    height: 34px;
    padding: 0 16px 0 24px;
    flex: none;
}

.timecode {
    color: #2d8ceb;
    font: 600 18px/24px "Open Sans", sans-serif;
}

.duration {
    margin-left: auto;
    font: 600 18px/24px "Open Sans", sans-serif;
}

.drop {
    position: relative;
    width: 83px;
    height: 22px;
    margin-left: 14px;
    background: #1d1d1d;
    border: 1px solid #303030;
    border-radius: 2px;
    color: #b0b0b0;
}

.timecode + .drop {
    margin-left: 31px;
}

.drop select {
    appearance: none;
    width: 100%;
    height: 100%;
    padding-left: 8px;
}

.drop svg {
    position: absolute;
    right: 5px;
    top: 7px;
    width: 12px;
    height: 8px;
    pointer-events: none;
}

.wrench {
    margin-left: 16px;
    color: #b0b0b0;
}

.wrench svg {
    width: 18px;
    height: 18px;
}

.monitor-ruler {
    position: relative;
    display: flex;
    flex: none;
    height: 14px;
    margin: 12px 16px 0;
    clip-path: inset(-6px 0 0 0);
}

.monitor-ruler i {
    flex: 0 0 101px;
    border-left: 1px solid #666;
    background: linear-gradient(90deg, #666 1px, transparent 1px) 0 100% / 10% 6px repeat-x;
    background-origin: border-box;
}

.monitor-head {
    position: absolute;
    left: 117px;
    top: -4px;
    width: 14px;
    height: 16px;
}

.zoom-bar {
    position: relative;
    height: 14px;
    background: #333;
    border-radius: 7px;
    flex: none;
}

.monitor-ruler + .zoom-bar {
    margin: 0 16px;
}

.zoom-bar::before, .zoom-bar::after, .v-bar::before, .v-bar::after {
    content: "";
    position: absolute;
    width: 13px;
    height: 13px;
    border: 3px solid #949494;
    border-radius: 50%;
}

.zoom-bar::before {
    left: 2px;
}

.zoom-bar::after {
    right: 1px;
}

.transport {
    display: flex;
    align-items: center;
    flex: none;
    height: 40px;
    padding: 7px 32px 0 93px;
    color: #b5b5b5;
}

.transport > button {
    width: 14px;
    margin-right: 29px;
    display: grid;
    place-items: center;
}

.transport > button:first-child {
    margin-right: 41px;
}

.transport-end {
    display: flex;
    gap: 10px;
    align-items: center;
    margin-left: auto;
}

.transport-end .raised {
    padding-bottom: 14px;
}

/* project panel */

.project {
    width: 431px;
    padding-left: 1px;
}

.project .tabs {
    gap: 28px;
    padding: 0 4px 0 15px;
}

.project .tabs button + button + button {
    margin-left: 28px;
}

.project .tabs .overflow:last-child {
    margin-left: auto;
}

.project-path {
    display: flex;
    align-items: center;
    gap: 16px;
    height: 42px;
    padding-left: 17px;
}

.project-path svg {
    width: 20px;
    height: 15px;
    color: #555;
}

.project-search {
    display: flex;
    align-items: center;
    height: 26px;
    padding: 0 16px;
    margin-bottom: 14px;
}

.project-search button {
    margin: 0 auto;
}

.search-box {
    display: flex;
    align-items: center;
    gap: 8px;
    width: 250px;
    height: 26px;
    padding: 0 7px;
    background: #151515;
    border: 1px solid #303030;
    border-radius: 2px;
    color: #c8c8c8;
}

.search-box svg {
    width: 16px;
    height: 16px;
}

.search-box input {
    flex: 1;
    min-width: 0;
}

.folder {
    width: 18px;
    height: 15px;
    color: #b0b0b0;
}

.file {
    width: 18px;
    height: 18px;
    color: #b0b0b0;
}

.bin {
    position: relative;
    flex: 1;
    min-height: 0;
    margin: 0 15px 0 16px;
    border: 1px solid #303030;
    background: #1d1d1d;
    overflow: hidden;
}

.bin table {
    width: 100%;
    table-layout: fixed;
    border-collapse: collapse;
}

.c-label {
    width: 33px;
}

.c-gap {
    width: 11px;
}

.c-media {
    width: 45px;
}

.bin th {
    height: 24px;
    padding: 0 0 0 6px;
    text-align: left;
    font-weight: normal;
    color: #b5b5b5;
    background: #252525;
    border-right: 1px solid #303030;
    border-bottom: 1px solid #303030;
    white-space: nowrap;
}

.bin td {
    height: 30px;
    padding: 0;
    border-bottom: 2px solid #292929;
}

.sort-up {
    display: inline-block;
    width: 15px;
    height: 10px;
    margin-left: 8px;
}

.swatch {
    display: block;
    width: 18px;
    height: 18px;
    margin-left: 7px;
    background: #eea43a;
    border: 1px solid #3a3a3a;
}

.swatch.pink {
    background: #e283e3;
}

.item {
    display: flex;
    align-items: center;
    gap: 13px;
}

.item .chev {
    width: 6px;
    height: 10px;
    margin: 0 5px 0 12px;
}

.bin .selected td {
    background: #4b4b4b;
}

.bin-scroll-y {
    position: absolute;
    top: 25px;
    right: 0;
    bottom: 0;
    width: 16px;
    background: #1d1d1d;
}

.bin-scroll-y::before {
    content: "";
    display: block;
    width: 13px;
    height: 136px;
    margin: 1px;
    border-radius: 7px;
    background: #333;
}

.bin-scroll-x {
    position: absolute;
    left: 0;
    right: 16px;
    bottom: 0;
    height: 17px;
    padding: 3px 15px;
    background: #1d1d1d;
    border-right: 1px solid #303030;
}

.bin-scroll-x::before {
    content: "";
    display: block;
    width: 47px;
    height: 12px;
    border-radius: 6px;
    background: #333;
}

.project-footer {
    display: flex;
    flex: none;
    align-items: center;
    gap: 20px;
    height: 56px;
    padding: 10px 0 0 17px;
    color: #b0b0b0;
    overflow: hidden;
}

.project-footer input {
    margin: 0 8px 0 -6px;
}

.project-footer .dim {
    display: flex;
    align-items: center;
    gap: 14px;
    margin-right: 9px;
    color: #4c4c4c;
}

.cut-bin {
    width: 5px;
    height: 12px;
    background: #b0b0b0;
}

input[type="range"] {
    appearance: none;
    height: 14px;
    width: 84px;
    background: linear-gradient(#444, #444) 0 50% / 100% 2px no-repeat;
}

input[type="range"]::-webkit-slider-thumb {
    appearance: none;
    width: 13px;
    height: 13px;
    border: 3px solid #949494;
    border-radius: 50%;
    background: #232323;
}

/* timeline */

.timeline {
    flex: 1;
}

.timeline .tabs {
    gap: 66px;
    padding: 0 11px 0 20px;
}

.timeline .tabs .current {
    margin-left: -20px;
}

.close {
    margin-right: 12px;
    color: #999;
}

.timeline-body {
    position: relative;
    display: grid;
    grid-template-columns: 1fr 29px;
    overflow: hidden;
}

.timeline-top {
    display: flex;
    height: 58px;
    grid-column: 1 / 3;
}

.timeline-tools {
    width: 296px;
    padding: 6px 0 0 22px;
}

.timeline-tools .timecode {
    display: block;
    font-size: 20px;
    line-height: 26px;
}

.timeline-icons {
    display: flex;
    align-items: center;
    justify-content: space-between;
    width: 242px;
    height: 24px;
    padding: 2px 5px 0;
    color: #b5b5b5;
}

.timeline-icons .cc {
    width: 20px;
    height: 13px;
    border-radius: 2px;
    background: #b5b5b5;
    color: #232323;
    font: 900 11px/13px Lato, sans-serif;
    text-align: center;
}

.timeline-ruler {
    width: calc(100% - 325px);
    overflow: hidden;
    color: #a5a5a5;
}

.labels {
    display: flex;
    height: 40px;
    padding-top: 20px;
}

.labels span {
    flex: 0 0 149px;
    text-align: center;
}

.labels span:first-child {
    flex-basis: 76px;
    text-align: left;
}

.ticks {
    display: flex;
    height: 14px;
}

.ticks i {
    flex: 0 0 149px;
    border-left: 1px solid #666;
    background: linear-gradient(90deg, #666 1px, transparent 1px) 0 100% / calc(100% / 15) 6px repeat-x;
    background-origin: border-box;
}

.work-area {
    width: 218px;
    height: 3px;
    margin-top: 1px;
    background: #f1ee2c;
}

.track {
    display: flex;
    height: 30px;
}

.track.line {
    height: 31px;
    border-top: 1px solid #383838;
}

.track.short {
    height: 24px;
}

.divider {
    height: 7px;
    background: #333;
}

.track-head {
    width: 296px;
    display: grid;
    grid-template-columns: 16px 40px 25px 40px 34px 34px 34px 34px 39px;
    grid-template-rows: 100%;
    align-items: center;
    justify-items: center;
    background: #252525;
    border-right: 1px solid #303030;
    color: #b0b0b0;
}

/* the row is scrolled a little under the divider */
.track-head.top {
    padding-bottom: 6px;
}

.source {
    grid-column: 2;
}

.lock {
    grid-column: 3;
    width: 11px;
    height: 13px;
}

.source, .target {
    width: 100%;
    height: 100%;
    display: grid;
    place-items: center;
    background: #07568a;
    color: #9ac4e0;
    font-size: 12px;
}

.target {
    grid-column: 4;
}

.target.off {
    background: #222;
    color: #a5a5a5;
}

.sync {
    width: 16px;
    height: 12px;
}

.eye {
    width: 16px;
    height: 12px;
}

.mic {
    width: 12px;
    height: 18px;
}

.wide {
    grid-column: 7 / 9;
    justify-self: start;
    color: #8e8e8e;
    margin-left: 3px;
}

.mix {
    padding-top: 7px;
}

.mix-name {
    grid-column: 4;
    justify-self: start;
    margin-left: 3px;
    color: #8e8e8e;
}

.mix-value {
    grid-column: 6 / 8;
    color: #2d8ceb;
}

.bowtie {
    grid-column: 9;
    width: 16px;
    height: 14px;
    align-self: start;
}

.mix .bowtie {
    margin-top: -3px;
}

.lane {
    flex: 1;
    background: #1f1f1f;
}

.clip {
    position: relative;
    display: flex;
    width: 217px;
    height: 100%;
    padding: 4px 0 0 12px;
    gap: 8px;
    color: #111;
    font-size: 12px;
    line-height: 14px;
    border-left: 2px solid #ddd;
}

.clip.pink {
    background: #e283e3;
}

.clip.blue {
    background: #7199cd;
}

.clip.audio {
    display: block;
    padding: 0;
    background: #394d62;
}

.clip.audio > svg {
    width: 100%;
    height: 15px;
}

.clip.audio .fx {
    position: absolute;
    left: 12px;
    top: 4px;
}

.clip.chosen {
    width: 47px;
    margin-left: 53px;
    padding: 0 0 0 8px;
    background: #e283e3;
    border: 5px solid #dedede;
    border-top: none;
}

.fx {
    flex: none;
    width: 15px;
    height: 13px;
    background: #efc016;
    color: #333;
    font: italic 12px/12px Lato, sans-serif;
    text-align: center;
}

.fx.grey {
    background: #777;
    outline: 1px solid #999;
}

.track-scrolls {
    padding: 40px 16px 0 1px;
}

.v-bar {
    position: relative;
    background: #333;
    border-radius: 7px;
}

.v-bar::before, .v-bar::after {
    left: 0;
}

.v-bar::after {
    bottom: 0;
}

.video-bar {
    height: 82px;
    margin-bottom: 8px;
}

.audio-bar {
    height: 115px;
}

.h-scroll {
    background: #1b1b1b;
    border-radius: 7px;
    margin-left: 16px;
    box-shadow: inset 0 0 0 1px #2c2c2c;
}

.h-scroll .zoom-bar {
    width: 384px;
}

/* marks the current time across every track */
.playhead {
    position: absolute;
    left: 358px;
    top: 40px;
    bottom: 14px;
    width: 1px;
    background: #2d8ceb;
}

.playhead svg {
    width: 14px;
    height: 16px;
    margin-left: -7px;
}

/* audio meters */

.meters {
    width: 112px;
    padding: 33px 0 14px 16px;
}

.meter-main {
    flex: 1;
    min-height: 0;
    display: flex;
}

.meter-box {
    width: 54px;
    display: flex;
    border: 2px solid #080808;
    background: linear-gradient(#080808, #080808) 0 10px / 100% 2px no-repeat #1e1e1e;
}

.meter-box i {
    flex: 1;
    border-bottom: 2px solid #dcd955;
    background: linear-gradient(#080808, #080808) 100% 0 / 1px 10px no-repeat;
}

.meter-box i:last-child {
    margin-left: 1px;
}

.scale {
    list-style: none;
    display: flex;
    flex-direction: column;
    justify-content: space-between;
    padding: 7px 0 0 9px;
    margin-left: 1px;
    font-size: 12px;
    line-height: 14px;
    background: repeating-linear-gradient(#777 0 1px, transparent 1px 4px) 0 14px / 3px 280px no-repeat;
}

.scale li {
    position: relative;
}

.scale li::before {
    content: "";
    position: absolute;
    left: -9px;
    top: 7px;
    width: 5px;
    height: 1px;
    background: #888;
}

.solo {
    display: flex;
    gap: 6px;
    padding: 4px 0 0 3px;
}

.solo button {
    width: 21px;
    height: 22px;
    background: #1c1c1c;
    border: 1px solid #303030;
    font-size: 13px;
    color: #b0b0b0;
}

/* essential graphics */

.graphics {
    width: 354px;
}

.graphics-tabs {
    display: flex;
    gap: 25px;
    padding: 15px 19px 0;
    height: 58px;
    align-items: flex-start;
}

.graphics-tabs button {
    height: 24px;
    padding-bottom: 6px;
    border-bottom: 2px solid transparent;
}

.graphics-tabs .current {
    padding-right: 5px;
    color: #bcbcbc;
    border-color: #c0c0c0;
}

.source-switch {
    display: flex;
    margin: 0 20px 0 16px;
}

.source-switch button {
    display: flex;
    align-items: center;
    justify-content: center;
    flex: 0 0 184px;
    height: 37px;
    border: 1px solid #303030;
}

.source-switch .stock {
    flex: 1;
    justify-content: flex-end;
    border-right: none;
}

.source-switch .current {
    background: #151515;
    color: #2d8ceb;
}

.source-switch b {
    width: 18px;
    height: 17px;
    margin-right: 14px;
    border-radius: 3px;
    background: #b0b0b0;
    color: #222;
    font-size: 12px;
    line-height: 17px;
}

.graphics-search {
    display: flex;
    align-items: center;
    gap: 7px;
    padding: 11px 16px 0;
    color: #b0b0b0;
}

.graphics-search .search-box {
    width: 257px;
    height: 29px;
    padding-left: 11px;
}

.filters {
    padding: 11px 0 0 29px;
}

.filters > label, .filter-row {
    display: flex;
    align-items: center;
    height: 27px;
}

.filter-row {
    margin-top: 10px;
}

.filters input {
    appearance: none;
    width: 17px;
    height: 17px;
    margin-right: 5px;
    border: 2px solid #8a8a8a;
    border-radius: 1px;
    vertical-align: -4px;
}

.drop.off {
    width: 149px;
    height: 25px;
    margin-left: 22px;
    background: #282828;
    border-color: #282828;
    color: #444;
}

.drop.off select {
    opacity: 1;
}

.template-area {
    display: flex;
    flex: 1;
    min-height: 0;
    margin-top: 15px;
    padding-right: 20px;
    justify-content: space-between;
    overflow: hidden;
}

.templates {
    width: 282px;
    margin: 11px 0 0 26px;
}

.thumb {
    position: relative;
    height: 158px;
    background: #000;
    color: #ddd;
}

.templates figcaption {
    height: 40px;
    padding: 6px 0 0 1px;
    color: #a2a2a2;
}

.coming {
    padding: 10px 0 0 73px;
    font-size: 11px;
    font-style: italic;
    transform: rotate(-2deg);
    color: #bbb;
}

.coming b {
    color: #fff;
}

.warn {
    position: absolute;
    top: 0;
    right: 0;
    width: 20px;
    height: 17px;
}

.credits {
    padding-top: 112px;
    text-align: center;
    font: 3px/4px "Liberation Serif", serif;
    color: #777;
    white-space: nowrap;
}

.credits b {
    font-size: 5px;
    font-weight: normal;
    color: #aaa;
}

.caption-here {
    padding: 122px 0 0 103px;
    font-size: 12px;
    color: #777;
}

.caption-here b {
    color: #fff;
}

.template-scroll {
    width: 16px;
    background: #1e1e1e;
    padding: 1px 2px;
}

.template-scroll::before {
    content: "";
    display: block;
    height: 31px;
    border-radius: 6px;
    background: #333;
}

.graphics-footer {
    display: flex;
    align-items: center;
    height: 44px;
    padding: 0 19px 4px 22px;
    color: #b0b0b0;
}

.graphics-footer input {
    width: 138px;
    margin-right: 18px;
}

.graphics-footer button {
    display: flex;
    align-items: center;
    gap: 7px;
    padding-top: 6px;
}

.graphics-footer .new {
    margin-left: auto;
}

/* application status bar */

.statusbar {
    height: 25px;
    display: flex;
    align-items: center;
    justify-content: space-between;
    margin-top: 4px;
    padding: 0 6px 0 3px;
    background: #262626;
    color: #b0b0b0;
}

.statusbar button {
    padding-left: 8px;
    border-left: 1px solid #333;
}

/* windows taskbar */

.taskbar {
    height: 50px;
    flex: none;
    display: flex;
    align-items: center;
    background: #3f1a24;
    color: #fff;
    font: 14px/23px "Open Sans", sans-serif;
}

.start {
    width: 60px;
    display: grid;
    place-items: center;
}

.task-search {
    display: flex;
    align-items: center;
    gap: 14px;
    width: 430px;
    height: 50px;
    padding-left: 14px;
    background: #f2f2f2;
    border: 1px solid #bbb;
    color: #222;
    font-size: 18px;
}

.task-search svg {
    width: 20px;
    height: 20px;
}

.task-search input {
    flex: 1;
}

.task-search input::placeholder {
    color: #333;
}

.task-view {
    width: 64px;
    padding-right: 4px;
    display: grid;
    place-items: center;
}

.app {
    width: 62px;
    height: 50px;
    display: grid;
    place-items: center;
    background: linear-gradient(#7bb3e4, #7bb3e4) 50% 100% / 52px 3px no-repeat;
}

.app.alert {
    background: linear-gradient(#ff7d10, #ff7d10) 50% 100% / 100% 3px no-repeat #b25f29;
}

.app.front {
    background: linear-gradient(#7bb3e4, #7bb3e4) 50% 100% / 100% 3px no-repeat #644650;
}

.cc-icon {
    width: 28px;
    height: 28px;
    display: grid;
    place-items: center;
    border-radius: 6px;
    background: conic-gradient(#f80, #f02b2b, #d42ad4, #4b5df5, #1fc5c9, #4fc84a, #f7e020, #f80);
}

.tray {
    display: flex;
    align-items: center;
    gap: 12px;
    margin-left: auto;
}

.clock {
    width: 94px;
    margin-left: 4px;
    display: flex;
    flex-direction: column;
    align-items: center;
}

.notice {
    position: relative;
    width: 66px;
    padding-left: 15px;
}

.notice span {
    position: absolute;
    left: 25px;
    top: 9px;
    width: 20px;
    height: 20px;
    border: 1px solid #888;
    border-radius: 50%;
    background: #35272c;
    font-size: 12px;
    line-height: 18px;
    text-align: center;
}
```
